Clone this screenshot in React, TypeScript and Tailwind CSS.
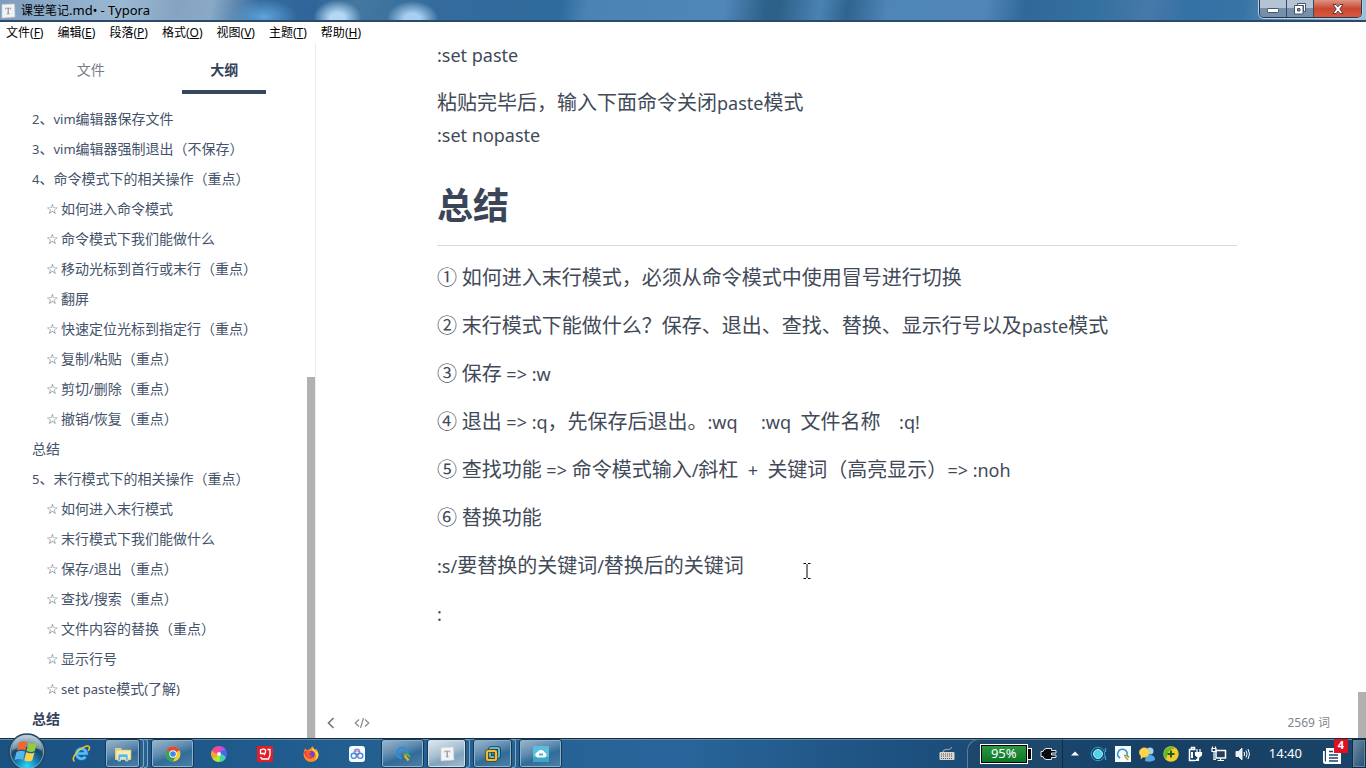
import type { ReactNode } from "react";

const MENU = [
  ["文件", "F"],
  ["编辑", "E"],
  ["段落", "P"],
  ["格式", "O"],
  ["视图", "V"],
  ["主题", "T"],
  ["帮助", "H"],
];

const OUTLINE: { text: string; star?: boolean; active?: boolean }[] = [
  { text: "2、vim编辑器保存文件" },
  { text: "3、vim编辑器强制退出（不保存）" },
  { text: "4、命令模式下的相关操作（重点）" },
  { text: "如何进入命令模式", star: true },
  { text: "命令模式下我们能做什么", star: true },
  { text: "移动光标到首行或末行（重点）", star: true },
  { text: "翻屏", star: true },
  { text: "快速定位光标到指定行（重点）", star: true },
  { text: "复制/粘贴（重点）", star: true },
  { text: "剪切/删除（重点）", star: true },
  { text: "撤销/恢复（重点）", star: true },
  { text: "总结" },
  { text: "5、末行模式下的相关操作（重点）" },
  { text: "如何进入末行模式", star: true },
  { text: "末行模式下我们能做什么", star: true },
  { text: "保存/退出（重点）", star: true },
  { text: "查找/搜索（重点）", star: true },
  { text: "文件内容的替换（重点）", star: true },
  { text: "显示行号", star: true },
  { text: "set paste模式(了解)", star: true },
  { text: "总结", active: true },
];

const SUMMARY = [
  "① 如何进入末行模式，必须从命令模式中使用冒号进行切换",
  "② 末行模式下能做什么？保存、退出、查找、替换、显示行号以及paste模式",
  "③ 保存 => :w",
  "④ 退出 => :q，先保存后退出。:wq     :wq  文件名称    :q!",
  "⑤ 查找功能 => 命令模式输入/斜杠  +  关键词（高亮显示）=> :noh",
  "⑥ 替换功能",
  ":s/要替换的关键词/替换后的关键词",
  ":",
];

/* Latin runs are set a little smaller than the Han text around them. */
function Mixed({ text, latin }: { text: string; latin: string }) {
  const parts = text.split(/([\x20-\x7e]+)/);
  return (
    <>
      {parts.map((part, i) =>
        /^[\x20-\x7e]/.test(part) ? (
          <span key={i} className={latin}>
            {part}
          </span>
        ) : (
          part
        ),
      )}
    </>
  );
}

function TyporaIcon({ className }: { className: string }) {
  return (
    <svg viewBox="0 0 16 16" className={className} aria-hidden="true">
      <path d="M2 1.5 14.5 1l.5 13-13 1z" fill="#f2f3f4" stroke="#c9cdd1" strokeWidth=".6" />
      <path d="M5.3 4.7h5.8v1.7h-.5l-.3-.8H8.8v5h.9v.7H6.8v-.7h.8v-5H6.1l-.3.8h-.5z" fill="#8b8f94" />
    </svg>
  );
}

function TitleBar() {
  return (
    <header className="flex h-[22px] shrink-0 items-start justify-between border-b-2 border-[#2a4a6b] bg-[radial-gradient(34px_18px_at_19.3%_85%,#5fa3dd,transparent),radial-gradient(24px_18px_at_24.7%_90%,#b5d7f3_30%,transparent),radial-gradient(26px_18px_at_30.2%_95%,#a9cff0_30%,transparent),linear-gradient(100deg,#7f9dba_0%,#8babc9_4%,#9bb8d2_9%,#86a4c1_13%,#8aa9c6_15.500%,#34699a_19%,#2f6699_23%,#44789f_26%,#336b9d_32%,#2f6b9c_41%,#4c83b5_43%,#5087b9_53%,#2d6189_56%,#2d6189_57%,#4a83b3_60%,#2f648f_62%,#4f86b8_65%,#5087b8_72%,#30689a_75%,#34709f_80%,#4679a8_84%,#3471a5_87%,#3a74a6_91%,#9fc0d9_100%)]">
      <div className="flex h-[21px] items-center gap-[5px]">
        <TyporaIcon className="h-4 w-4" />
        <span className="text-xs text-black">
          <Mixed text="课堂笔记.md• - Typora" latin="text-[13px]" />
        </span>
      </div>
      <div className="mr-1 flex h-[18px] overflow-hidden rounded-b-[5px] border border-t-0 border-[#25384d] shadow-[0_0_0_1px_#b9cfe1]">
        <button
          aria-label="最小化"
          className="flex w-[27px] items-center justify-center border-r border-[#344c66] bg-linear-to-b from-[#b5c4d5] from-50% to-[#7690ab] to-50%"
        >
          <svg viewBox="0 0 14 8" className="mt-1 h-2 w-3.5" aria-hidden="true">
            <rect x="1.5" y="1.5" width="11" height="4" rx=".7" fill="#fff" stroke="#46566a" />
          </svg>
        </button>
        <button
          aria-label="向下还原"
          className="flex w-[27px] items-center justify-center border-r border-[#344c66] bg-linear-to-b from-[#b5c4d5] from-50% to-[#7690ab] to-50%"
        >
          <svg viewBox="0 0 14 14" className="h-3.5 w-3.5" aria-hidden="true">
            <path d="M4.5 1.5h8v8h-2v-6h-6z" fill="#fff" stroke="#46566a" />
            <path d="M1.5 3.500h8.500v8.500h-8.500zM4.500 6.500v2.500h2.500v-2.500z" fill="#fff" fillRule="evenodd" stroke="#46566a" />
          </svg>
        </button>
        <button
          aria-label="关闭"
          className="flex w-[47px] items-center justify-center bg-linear-to-b from-[#dc9385] via-[#c84830] via-50% to-[#d8573f]"
        >
          <svg viewBox="0 0 14 12" className="h-3 w-3.5" aria-hidden="true">
            <path d="M2 1.500h3l2 2.300 2-2.300h3L8.800 6l3.200 4.500H9L7 8.200 5 10.500H2L5.200 6z" fill="#fff" stroke="#5b3a3d" />
          </svg>
        </button>
      </div>
    </header>
  );
}

function MenuBar() {
  return (
    <nav className="flex h-[21px] shrink-0 items-center gap-3.5 bg-white pl-1.5" aria-label="菜单">
      {MENU.map(([name, key]) => (
        <button key={key} className="whitespace-nowrap text-xs text-black">
          {name}(<span className="underline">{key}</span>)
        </button>
      ))}
    </nav>
  );
}

function Sidebar() {
  return (
    <aside className="flex w-[316px] shrink-0 border-r border-[#ececec]">
      <div className="min-w-0 flex-1">
        <div role="tablist" className="mr-4 ml-6 grid h-[51px] grid-cols-2 text-sm">
          <div className="flex justify-center">
            <button role="tab" aria-selected="false" className="w-21 border-b-4 border-transparent pt-1.5 text-[#777c85]">
              文件
            </button>
          </div>
          <div className="flex justify-center">
            <button role="tab" aria-selected="true" className="w-21 border-b-4 border-[#34495e] pt-1.5 font-bold text-[#34435a]">
              大纲
            </button>
          </div>
        </div>
        <ul className="pt-2.5 pl-8 text-sm text-[#45536a]">
          {OUTLINE.map((item, i) => (
            <li key={i} className={item.star ? "h-[30px] pl-3.5" : "h-[30px]"}>
              <a
                href="#summary"
                className={item.active ? "flex h-full items-center font-bold text-[#34435a]" : "flex h-full items-center"}
              >
                {item.star && <span className="w-[15px] font-['DejaVu_Sans',sans-serif]">☆</span>}
                <span className="whitespace-pre">
                  <Mixed text={item.text} latin="text-[13px]" />
                </span>
              </a>
            </li>
          ))}
        </ul>
      </div>
      <div className="flex w-2 flex-col justify-end">
        <div className="h-[52%] bg-[#b1b1b1]" />
      </div>
    </aside>
  );
}

function Editor() {
  return (
    <main className="relative flex min-w-0 flex-1">
      <div className="flex min-w-0 flex-1 flex-col">
        <article className="mx-auto w-full max-w-[800px] flex-1 overflow-hidden text-xl leading-8 whitespace-pre-wrap text-[#424a58]">
          <p className="leading-6">
            <Mixed text=":set paste" latin="text-lg/4" />
          </p>
          <p className="mt-5">
            <Mixed text="粘贴完毕后，输入下面命令关闭paste模式" latin="text-lg/4" />
            <br />
            <Mixed text=":set nopaste" latin="text-lg/4" />
          </p>
          <h1 id="summary" className="mt-8 border-b border-[#d9dadc] pb-4 text-4xl leading-[46px] font-bold text-[#3a4558]">
            总结
          </h1>
          {SUMMARY.map((line) => (
            <p key={line} className="mt-4">
              <Mixed text={line} latin="text-lg/4" />
            </p>
          ))}
        </article>
        <footer className="flex h-[30px] shrink-0 items-center justify-between pr-7 pl-2 text-xs text-[#80858d]">
          <div className="flex items-center gap-4">
            <button aria-label="隐藏侧边栏">
              <svg viewBox="0 0 14 14" className="h-3.5 w-3.5" fill="none" stroke="#6f747c" strokeWidth="1.600" aria-hidden="true">
                <path d="M9.500 2 4.500 7l5 5" />
              </svg>
            </button>
            <button aria-label="源代码模式">
              <svg viewBox="0 0 16 14" className="h-3.5 w-4" fill="none" stroke="#858a92" strokeWidth="1.200" aria-hidden="true">
                <path d="M5 3.500 1.200 7 5 10.500M11 3.500 14.800 7 11 10.500M9.500 2l-3 10" />
              </svg>
            </button>
          </div>
          <button>2569 词</button>
        </footer>
      </div>
      <div className="flex w-2 flex-col justify-end">
        <div className="h-[46px] bg-[#b1b1b1]" />
      </div>
      <svg
        viewBox="0 0 8 16"
        className="pointer-events-none absolute top-[520px] left-[487px] h-4 w-2"
        fill="none"
        stroke="#000"
        aria-hidden="true"
      >
        <path d="M.5.5h2.500M5 .5h2.500M4 1v14M.5 15.500h2.500M5 15.500h2.500" />
      </svg>
    </main>
  );
}

type Task = { label: string; state?: "open" | "active"; stack?: number; icon: ReactNode };

const TASKS: Task[] = [
  {
    label: "Internet Explorer",
    icon: (
      <svg viewBox="0 0 20 20" className="h-5 w-5">
        <path d="M14.500 12.800a5 5 0 1 1 1-3.300H7" fill="none" stroke="#1670b8" strokeWidth="4" />
        <path d="M14.500 12.800a5 5 0 1 1 1-3.300H7" fill="none" stroke="#58bdf3" strokeWidth="2.600" />
        <path d="M3.500 17.500C.5 15 3.500 9.500 9 5.500s9.500-4.500 9.500-1.800c0 1-.5 2-1.200 3" fill="none" stroke="#f2c62f" strokeWidth="1.500" />
      </svg>
    ),
  },
  {
    label: "资源管理器",
    state: "open",
    stack: 2,
    icon: (
      <svg viewBox="0 0 18 16" className="h-4 w-[18px]">
        <path d="M1 2h6l1 2h9v10H1z" fill="#e9d483" />
        <path d="M2 4h15v9H2z" fill="#f8ebb0" stroke="#d3b95f" strokeWidth=".6" />
        <path d="M4 15V9.500Q4 8 5.500 8h7Q14 8 14 9.500V15h-2.500v-3.500h-5V15z" fill="#64b5dd" stroke="#e4f5fc" strokeWidth=".6" />
      </svg>
    ),
  },
  {
    label: "Chrome",
    state: "open",
    icon: (
      <svg viewBox="0 0 16 16" className="h-4 w-4">
        <circle cx="8" cy="8" r="7.500" fill="#f7cb38" />
        <path d="M8 8 1.500 4.250A7.500 7.500 0 0 1 14.500 4.250z" fill="#df4937" />
        <path d="M8 8 1.500 4.250A7.500 7.500 0 0 0 8 15.500l3-5.700z" fill="#35a257" />
        <circle cx="8" cy="8" r="3.700" fill="#fff" />
        <circle cx="8" cy="8" r="2.800" fill="#4285e8" />
      </svg>
    ),
  },
  {
    label: "取色器",
    icon: (
      <svg viewBox="0 0 16 16" className="h-4 w-4">
        <path d="M8 8Q5 4 8 0a8 8 0 0 1 6.900 4Q12 8 8 8" fill="#bd4fe8" />
        <path d="M8 8Q10 3.500 14.900 4a8 8 0 0 1 0 8Q10 12 8 8" fill="#4a68e8" />
        <path d="M8 8Q13 8 14.900 12A8 8 0 0 1 8 16Q5 12 8 8" fill="#43d8a2" />
        <path d="M8 8Q10 13 8 16a8 8 0 0 1-6.900-4Q4 8 8 8" fill="#b7e83d" />
        <path d="M8 8Q6 12.500 1.100 12a8 8 0 0 1 0-8Q6 4 8 8" fill="#f7a52c" />
        <path d="M8 8Q3 8 1.100 4A8 8 0 0 1 8 0q3 4 0 8" fill="#f04c93" />
        <circle cx="8" cy="8" r="2" fill="#f4f6f7" />
      </svg>
    ),
  },
  {
    label: "录屏",
    icon: (
      <svg viewBox="0 0 16 16" className="h-4 w-4">
        <rect width="16" height="16" rx="1" fill="#df1f29" />
        <path d="M8 9 6.500 7.500H3.500V4l3-1 2 1v2.500L7 8m3.500-4.500H13V9l-1.500 4H5l-1.500-2" fill="none" stroke="#fff" strokeWidth="1.300" />
      </svg>
    ),
  },
  {
    label: "Firefox",
    icon: (
      <svg viewBox="0 0 16 16" className="h-4 w-4">
        <path d="M1 5.500 2.200 2l1.500 2.200L7 3l2.500-3q0 2 2.500 3.500L13.500 3q2 2.800 2 5.500a7.500 7.500 0 0 1-15 0Q.5 7 1 5.500" fill="#ff8b20" />
        <path d="M10 .8q0 2 2.700 4T15.400 9a7 7 0 0 1-4 5.800Q14 12 13 8.500T9 4z" fill="#ffd43b" />
        <path d="M1 6q2-2 5-1l2 1 2.500.5q2 3-.2 5T5 12 1 6" fill="#ee3a55" />
        <circle cx="8.500" cy="8.300" r="3.300" fill="#7940c5" />
        <path d="M3 5.200q3-1 5 1L6 8q1 2.300 3.500 1.500-1.500 2.300-4 1.300T3 5.200" fill="#fa5b34" />
      </svg>
    ),
  },
  {
    label: "百度网盘",
    icon: (
      <svg viewBox="0 0 16 16" className="h-4 w-4">
        <rect width="16" height="16" rx="3" fill="#f7fbff" />
        <g fill="none" strokeWidth="1.400">
          <circle cx="8" cy="5.700" r="2.600" stroke="#5a9fe6" />
          <circle cx="4.800" cy="9.800" r="2.600" stroke="#3c8fe6" />
          <circle cx="11.200" cy="9.800" r="2.600" stroke="#3c8fe6" />
          <path d="M5.600 6.500a2.600 2.600 0 0 1 4.800 0M8 9.200l1.500 2" stroke="#f06b7c" />
        </g>
      </svg>
    ),
  },
  {
    label: "Everything",
    state: "open",
    icon: (
      <svg viewBox="0 0 16 16" className="h-4 w-4" fill="none" strokeWidth="2.200">
        <path d="M12 9.500A5.300 5.300 0 1 0 7 12.300" stroke="#278fe0" />
        <path d="M9 8.500h3.500L15 11" stroke="#56b63e" />
        <path d="m9.500 9.500 4 5" stroke="#f0a831" />
      </svg>
    ),
  },
  { label: "Typora", state: "active", stack: 1, icon: <TyporaIcon className="h-4 w-4" /> },
  {
    label: "VMware",
    state: "open",
    stack: 1,
    icon: (
      <svg viewBox="0 0 16 16" className="h-4 w-4" fill="none">
        <rect x="5" y="2" width="9" height="9" rx="1" stroke="#183f55" strokeWidth="3.600" />
        <rect x="5" y="2" width="9" height="9" rx="1" stroke="#5cbcd6" strokeWidth="2" />
        <rect x="2" y="5" width="9" height="9" rx="1" stroke="#4d431b" strokeWidth="3.600" />
        <rect x="2" y="5" width="9" height="9" rx="1" stroke="#f2bd35" strokeWidth="2.200" />
      </svg>
    ),
  },
  {
    label: "云盘",
    state: "open",
    icon: (
      <svg viewBox="0 0 16 16" className="h-4 w-4">
        <rect width="16" height="16" rx="1" fill="#59bfdc" />
        <path d="M0 11h16v5H0z" fill="#3fa6c8" />
        <path d="M4.500 11.500a2.800 2.800 0 0 1 0-5.500Q6 3.500 8.500 4t3 2.300a2.700 2.700 0 0 1 0 5.200z" fill="#fff" />
        <path d="M6 7.500h4v2H6z" fill="#48afd0" />
      </svg>
    ),
  },
];

const FACE = {
  none: "flex h-full flex-1 items-center justify-center",
  open: "flex h-full flex-1 items-center justify-center rounded-[3px] border border-[#143a59] bg-[linear-gradient(160deg,#9db8cd_0%,#5f8baf_40%,#316b98_60%,#4d82a8_100%)] shadow-[inset_0_0_0_1px_#8fb1cb]",
  active:
    "flex h-full flex-1 items-center justify-center rounded-[3px] border border-[#143a59] bg-[linear-gradient(160deg,#e2eaf0_0%,#a9c0d1_45%,#7fa2bc_65%,#a7bfd0_100%)] shadow-[inset_0_0_0_1px_#d0dee8]",
};

function TaskButton({ task }: { task: Task }) {
  return (
    <div className={task.state ? "flex h-full w-[46px] pr-0.5 pl-px" : "flex h-full w-[46px]"}>
      <button aria-label={task.label} className={FACE[task.state ?? "none"]}>
        {task.icon}
      </button>
      {Array.from({ length: task.stack ?? 0 }, (_, i) => (
        <span key={i} className="h-full w-1 rounded-r-[3px] border-y border-r border-[#7fa6c4] bg-[#28618e]" />
      ))}
    </div>
  );
}

const TRAY: { label: string; icon: ReactNode }[] = [
  {
    label: "助手",
    icon: (
      <svg viewBox="0 0 18 16" className="h-4 w-[18px]" fill="none">
        <circle cx="8" cy="8" r="6.800" stroke="#2d9ec4" strokeWidth="1" />
        <circle cx="8" cy="8" r="4.500" fill="#4fd2ec" stroke="#a5effa" />
        <path d="M16 2q-2 2 0 4m0 4q-2 2 0 4" stroke="#4bb8d5" />
      </svg>
    ),
  },
  {
    label: "Everything",
    icon: (
      <svg viewBox="0 0 16 16" className="h-4 w-4" fill="none">
        <rect width="16" height="16" fill="#f8fbfd" />
        <path d="M12 9A4.700 4.700 0 1 0 5 12" stroke="#2f8edb" strokeWidth="1.500" />
        <path d="M9 9.500h3l2 2" stroke="#54b63d" strokeWidth="1.600" />
        <path d="m10 10.500 3 3.500" stroke="#ef8c35" strokeWidth="1.600" />
      </svg>
    ),
  },
  {
    label: "消息",
    icon: (
      <svg viewBox="0 0 16 16" className="h-4 w-4">
        <circle cx="11" cy="5" r="3.500" fill="#9bd4f6" />
        <path d="M6 15q0-6 5-6t5 5q-5 3-10 1" fill="#54a8e4" />
        <path d="M1 4q3-4 8-1 3 3 0 7-3 2-5 1l-2 2v-3Q-1 7 1 4" fill="#ffd454" stroke="#f6b833" strokeWidth=".6" />
      </svg>
    ),
  },
  {
    label: "安全",
    icon: (
      <svg viewBox="0 0 16 16" className="h-4 w-4">
        <circle cx="8" cy="8" r="7.700" fill="#f0cf28" />
        <path d="M.5 8a7.500 7.500 0 0 1 12-5.500Q4 2 3.500 13A7.500 7.500 0 0 1 .5 8" fill="#65b92c" />
        <path d="M7 4.500h2V7h2.500v2H9v2.500H7V9H4.500V7H7z" fill="#235d2b" />
      </svg>
    ),
  },
  {
    label: "电源",
    icon: (
      <svg viewBox="0 0 16 16" className="h-4 w-4" fill="none" stroke="#fff">
        <path d="M8 14.500H2.500v-11h6M4.500 3V1.500h3V3" strokeWidth="1.500" />
        <path d="M5 6v6" strokeWidth="2" />
        <path d="M8.500 6.500h6v2.500l-2 2h-2l-2-2zM10 3v3m3-3v3m-1.500 5v3.500H8" fill="#fff" strokeWidth="1.200" />
      </svg>
    ),
  },
  {
    label: "网络",
    icon: (
      <svg viewBox="0 0 16 16" className="h-4 w-4" fill="none" stroke="#fff">
        <path d="M5 4.500h9.500v7.500H5z" fill="#263f58" strokeWidth="1.500" />
        <path d="M6.500 14.500H13M9.500 12v2M1 2.500h4v3H1zM1.500.5v2m3-2v2M3 5.500v8h2" strokeWidth="1.200" />
      </svg>
    ),
  },
  {
    label: "音量",
    icon: (
      <svg viewBox="0 0 16 16" className="h-4 w-4" fill="none" stroke="#fff">
        <path d="M1 5.500h2.500L7 2v12l-3.500-3.500H1z" fill="#e9eff4" strokeWidth=".8" />
        <path d="M9 6q1.300 2 0 4m2-5.500q2.200 3.500 0 7M13 3q3 5 0 10" strokeWidth="1" />
      </svg>
    ),
  },
];

function Taskbar() {
  return (
    <footer className="relative flex h-[30px] shrink-0 items-stretch justify-between border-t border-[#152d43] bg-[linear-gradient(90deg,#195181_0%,#235e91_25%,#29659a_50%,#1d517f_66%,#173f63_85%,#1a4469_100%)] shadow-[inset_0_1px_0_#668ba9]">
      <div className="flex items-stretch">
        <div className="relative w-[58px]">
          <button aria-label="开始" className="absolute bottom-[-3px] left-2 h-[38px] w-[38px]">
            <svg viewBox="0 0 38 38" className="h-full w-full">
              <defs>
                <radialGradient id="orb" cx=".5" cy=".9" r=".85">
                  <stop offset="0" stopColor="#27ddfa" />
                  <stop offset=".32" stopColor="#1686bd" />
                  <stop offset=".62" stopColor="#194466" />
                  <stop offset="1" stopColor="#a3bccd" />
                </radialGradient>
              </defs>
              <circle cx="19" cy="19" r="18" fill="url(#orb)" stroke="#244864" strokeWidth="1.500" />
              <circle cx="19" cy="19" r="16.500" fill="none" stroke="#8fb2c8" strokeWidth=".8" />
              <path d="M4 17a15 15 0 0 1 30 0Q19 11 4 17" fill="#fff" opacity=".3" />
              <path d="M11 9.500q4-2.500 8.300-.3l-2 8.300q-4-2-8.300.3z" fill="#ed6634" />
              <path d="M20.500 9.800q4 2 8.500 0l-2.200 8.300q-4 2-8.300-.3z" fill="#8fcc3f" />
              <path d="M8.500 19q4.500-2.500 8.500-.3L15 27q-4-2-8.500.3z" fill="#58b5ea" />
              <path d="M18.200 19.300q4 2 8.300.1l-2.200 8.200q-4 2-8.100-.2z" fill="#fdd046" />
            </svg>
          </button>
        </div>
        {TASKS.map((task) => (
          <TaskButton key={task.label} task={task} />
        ))}
      </div>

      <div className="flex items-center text-white">
        <button aria-label="键盘" className="mr-3">
          <svg viewBox="0 0 16 14" className="h-3.5 w-4" aria-hidden="true">
            <path d="M4 5q0-3 4-2.500T13 0" fill="none" stroke="#b3a99f" />
            <rect x=".5" y="5" width="15" height="8" rx="1" fill="#d9d5cf" />
            <path d="M2 7h12M2 9h12M2 11.500h12" stroke="#575757" strokeWidth="1.100" strokeDasharray="1 1" />
          </svg>
        </button>
        <div className="flex h-full items-center rounded-tl-xl border-t border-r border-l border-t-[#5c7e9a] border-r-[#122d43] border-l-[#5c7e9a] bg-[#1d486c] pr-1 pl-3">
          <div className="flex items-center">
            <div className="flex h-5 w-12 items-center justify-center border border-white bg-linear-to-b from-[#2c9a44] to-[#087324] text-[13px] outline-1 -outline-offset-2 outline-black">
              95%
            </div>
            <div className="h-3 w-1 border border-l-0 border-white bg-black" />
          </div>
          <svg viewBox="0 0 18 14" className="ml-2 h-3.5 w-[18px]" aria-hidden="true">
            <path
              d="M6 1.500h5.500v2H16V6h-4.500v2H16v2.500h-4.500v2H6q-2.500-.5-3-3H1v-5h2q.5-2.500 3-3"
              fill="#080b0e"
              stroke="#dfe7ed"
              strokeWidth="1"
            />
          </svg>
        </div>
        <button aria-label="显示隐藏的图标" className="flex w-6 justify-center">
          <svg viewBox="0 0 8 5" className="h-[5px] w-2">
            <path d="m0 4.500 4-4 4 4z" fill="#fff" />
          </svg>
        </button>
        {TRAY.map((item) => (
          <button key={item.label} aria-label={item.label} className="flex w-6 justify-center">
            {item.icon}
          </button>
        ))}
        <time className="ml-3.5 text-[13px]">14:40</time>
        <button aria-label="通知" className="relative ml-5 h-6 w-[26px]">
          <svg viewBox="0 0 20 18" className="mt-1 h-[18px] w-5" aria-hidden="true">
            <path d="M4 1h15v16H3.500Q1 17 1 15V4h1.800v10.500q1.200.5 1.200-1z" fill="#fff" />
            <path d="M7 4.500h4M7 8h9M7 11h9M7 14h9" stroke="#1a4469" strokeWidth="1.300" />
          </svg>
          <span className="absolute top-[-3px] right-0 flex h-3.5 w-3.5 items-center justify-center bg-[#df1020] text-[11px] font-bold">
            4
          </span>
        </button>
        <button
          aria-label="显示桌面"
          className="ml-1 h-full w-3.5 border border-[#0f2c45] bg-linear-to-br from-[#6f8ea6] to-[#234e70] shadow-[inset_0_0_0_1px_#64859d]"
        />
      </div>
    </footer>
  );
}

export default function App() {
  return (
    <div
      lang="zh-CN"
      className="flex h-screen flex-col overflow-hidden bg-white font-['Noto_Sans','Noto_Sans_CJK_SC',sans-serif]"
    >
      <TitleBar />
      <MenuBar />
      <div className="flex min-h-0 flex-1">
        <Sidebar />
        <Editor />
      </div>
      <Taskbar />
    </div>
  );
}
